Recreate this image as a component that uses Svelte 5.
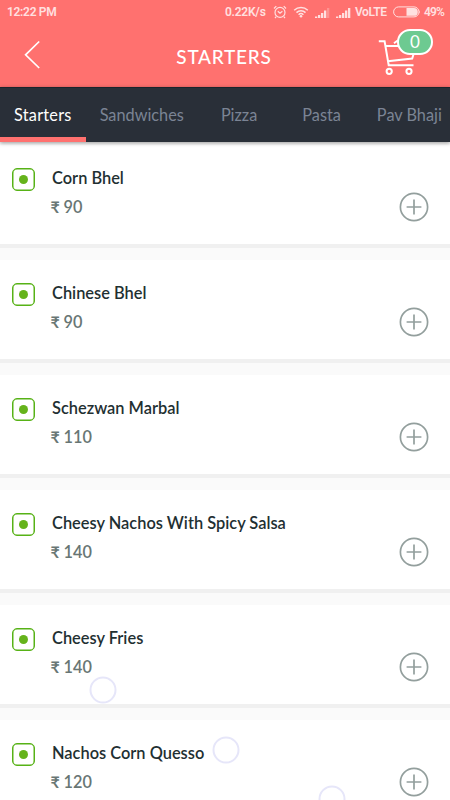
<script lang="ts">
    const tabs = ["Starters", "Sandwiches", "Pizza", "Pasta", "Pav Bhaji"];

    const items = [
        { name: "Corn Bhel", price: 90 },
        { name: "Chinese Bhel", price: 90 },
        { name: "Schezwan Marbal", price: 110 },
        { name: "Cheesy Nachos With Spicy Salsa", price: 140 },
        { name: "Cheesy Fries", price: 140 },
        { name: "Nachos Corn Quesso", price: 120 },
    ];

    const bubbles = [
        { x: 103, y: 690 },
        { x: 226, y: 750 },
        { x: 332, y: 799 },
    ];

    let active = $state("Starters");
    let count = $state(0);
</script>

<div class="screen">
    <header>
        <div class="status">
            <span class="clock">12:22 PM</span>
            <span class="speed">0.22K/s</span>
            <svg class="alarm" width="14" height="14" viewBox="0 0 14 14">
                <circle cx="7" cy="7.4" r="5" />
                <path d="M4.8 6.2L7 8.2L9.4 6.2M1 3.5L3.3 1.2M13 3.5L10.7 1.2M3.2 11.6L2 13M10.8 11.6L12 13" />
            </svg>
            <svg class="wifi" width="16" height="12" viewBox="0 0 16 12">
                <path d="M1.2 4.2C5 .6 11 .6 14.8 4.2M3.5 6.6C6 4.2 10 4.2 12.5 6.6M5.6 8.7C7 7.4 9 7.4 10.4 8.7" />
                <circle cx="8" cy="10.2" r="1.3" />
            </svg>
            <svg class="signal" width="15" height="10" viewBox="0 0 15 10">
                <path d="M0 8.5h2.3V10H0zM3 7h2.3v3H3zM6 5h2.3v5H6zM9 2.5h2.3V10H9z" />
                <path class="dim" d="M12 0h2.3v10H12z" />
            </svg>
            <svg class="signal second" width="15" height="10" viewBox="0 0 15 10">
                <path d="M0 8.5h2.3V10H0zM3 7h2.3v3H3zM6 5h2.3v5H6zM9 2.5h2.3V10H9zM12 0h2.3v10H12z" />
            </svg>
            <span class="volte">VoLTE</span>
            <svg class="battery" width="28" height="12" viewBox="0 0 28 12">
                <rect x=".6" y=".9" width="25.4" height="10" rx="5" />
                <path d="M13.5 2h7.4a3.9 3.9 0 0 1 0 7.8h-7.4zM26 4.2q1.6 1.7 0 3.4z" />
            </svg>
            <span class="percent">49%</span>
        </div>
        <div class="bar">
            <button class="back" aria-label="Back">
                <svg width="18" height="30" viewBox="0 0 18 30">
                    <path d="M15.2 1.5L1.6 14.8L15.2 28" />
                </svg>
            </button>
            <h1>STARTERS</h1>
            <button class="cart" aria-label="Cart">
                <svg width="40" height="38" viewBox="0 0 40 38">
                    <path d="M.8 3.3H6.6L10.7 27.2H35.5M7.2 8H22M16 5.2L20 2.2M9.8 23.2L34.2 20.5L36.5 13" />
                    <circle cx="11.2" cy="33.3" r="2.6" />
                    <circle cx="31" cy="33.3" r="2.6" />
                </svg>
                <span class="badge">{count}</span>
            </button>
        </div>
    </header>

    <nav>
        {#each tabs as tab}
            <button class:active={tab === active} onclick={() => (active = tab)}>{tab}</button>
        {/each}
    </nav>

    <main>
        {#each items as item}
            <article>
                <span class="veg"></span>
                <div class="info">
                    <h2>{item.name}</h2>
                    <p><span class="rupee">₹</span>{item.price}</p>
                </div>
                <button class="add" aria-label="Add {item.name}" onclick={() => count++}>
                    <svg width="30" height="30" viewBox="0 0 30 30">
                        <circle cx="15" cy="15" r="13.6" />
                        <path d="M15 7.6V22.4M7.6 15H22.4" />
                    </svg>
                </button>
            </article>
        {/each}
    </main>

    {#each bubbles as bubble}
        <span class="bubble" style="left:{bubble.x}px; top:{bubble.y}px;"></span>
    {/each}
</div>

<style>
    :global(body) {
        margin: 0;
        overflow: hidden;
    }

    .screen {
        position: relative;
        width: 450px;
        height: 800px;
        overflow: hidden;
        background: #fafafa;
        font-family: Lato, "Liberation Sans", sans-serif;
    }

    button {
        padding: 0;
        border: 0;
        background: none;
        font: inherit;
        cursor: pointer;
    }

    svg {
        display: block;
        flex-shrink: 0;
        fill: none;
        stroke: #fff;
    }

    header {
        height: 87px;
        background: #ff716f;
    }

    .status {
        display: flex;
        align-items: center;
        height: 24px;
        padding: 0 7px;
        font-family: Roboto, sans-serif;
        font-size: 12px;
        font-weight: 600;
        line-height: 24px;
        color: #ffe0e0;
        white-space: nowrap;
    }

    .status svg {
        stroke: #ffe0e0;
    }

    .clock {
        flex: 1;
        letter-spacing: -0.3px;
    }

    .speed {
        width: 47px;
        margin-right: 1px;
        letter-spacing: -0.25px;
    }

    .alarm {
        margin-right: 6px;
        stroke-width: 1.2;
    }

    .wifi {
        margin-right: 6px;
        stroke-width: 1.5;
    }

    .status .wifi circle,
    .status .signal,
    .status .battery path {
        fill: #ffe0e0;
        stroke: none;
    }

    .signal {
        margin: 2px 6px 0 0;
    }

    .second {
        margin-right: 4px;
    }

    .dim {
        opacity: 0.3;
    }

    .volte {
        width: 38px;
        letter-spacing: -0.4px;
    }

    .battery {
        margin-right: 3px;
    }

    .percent {
        width: 19px;
        letter-spacing: -0.9px;
    }

    .bar {
        display: flex;
        align-items: center;
        justify-content: space-between;
        height: 63px;
        padding: 0 16px 0 24px;
    }

    .back {
        width: 46px;
        margin-bottom: 2px;
        stroke-width: 1.7;
    }

    h1 {
        margin: 2px 0 0;
        font-size: 19px;
        font-weight: 500;
        line-height: 24px;
        letter-spacing: 0.75px;
        color: #fff;
    }

    .cart {
        position: relative;
        width: 56px;
        height: 38px;
        margin-top: 2px;
        stroke-width: 2;
    }

    .badge {
        position: absolute;
        top: -9px;
        left: 19px;
        box-sizing: border-box;
        width: 36px;
        height: 26px;
        border: 2.5px solid #fff;
        border-radius: 13px;
        background: #6dca91;
        font-size: 17px;
        line-height: 22px;
        text-align: center;
        color: #fff;
    }

    nav {
        position: relative;
        display: flex;
        box-sizing: border-box;
        height: 55px;
        border-top: 1px solid #1b242c;
        background: #292f38;
        box-shadow: 0 1px 4px rgba(0, 0, 0, 0.4);
    }

    nav button {
        box-sizing: border-box;
        flex-shrink: 0;
        min-width: 82.5px;
        padding: 0 14px;
        border-top: 4px solid transparent;
        border-bottom: 5px solid transparent;
        font-size: 16.3px;
        color: #7b8494;
    }

    nav button.active {
        border-bottom-color: #ff716f;
        letter-spacing: 0.25px;
        color: #fff;
    }

    main {
        padding-top: 3px;
    }

    article {
        display: flex;
        box-sizing: border-box;
        height: 103px;
        margin-bottom: 12px;
        padding: 0 21px 0 12px;
        border-bottom: 4px solid #f0f0f0;
        background: #fff;
    }

    .veg {
        display: flex;
        align-items: center;
        justify-content: center;
        box-sizing: border-box;
        width: 23px;
        height: 23px;
        margin-top: 23px;
        border: 1.5px solid #57b216;
        border-radius: 5px;
        box-shadow: inset 0 0 0 0.5px #57b216;
    }

    .veg::before {
        content: "";
        width: 9px;
        height: 9px;
        border-radius: 50%;
        background: #65b31b;
    }

    .info {
        flex: 1;
        padding: 22px 0 0 17px;
    }

    h2 {
        margin: 0;
        font-size: 16.4px;
        font-weight: 600;
        line-height: 22px;
        color: #1f3032;
    }

    p {
        margin: 7px 0 0 -1.5px;
        font-size: 16.3px;
        font-weight: 600;
        line-height: 22px;
        color: #687674;
    }

    .rupee {
        display: inline-block;
        width: 13px;
        font-size: 16px;
        font-weight: 700;
    }

    .add {
        align-self: flex-start;
        margin-top: 47px;
    }

    .add svg {
        stroke: #939f9d;
        stroke-width: 1.7;
    }

    .bubble {
        position: absolute;
        box-sizing: border-box;
        width: 27px;
        height: 27px;
        border: 2px solid #e6e6f9;
        border-radius: 50%;
        transform: translate(-50%, -50%);
    }
</style>
